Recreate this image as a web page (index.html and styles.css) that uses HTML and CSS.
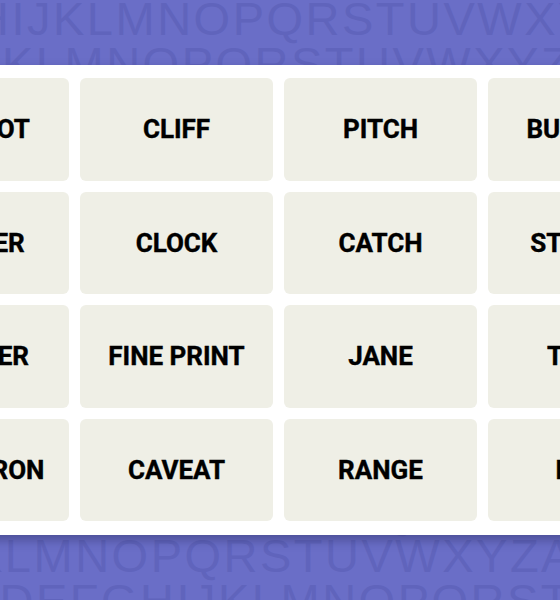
FILE: index.html
```html
<!DOCTYPE html>
<html lang="en">
<head>
<meta charset="utf-8">
<title>Connections board</title>
<link rel="stylesheet" href="styles.css">
</head>
<body>
<div class="letters" aria-hidden="true">
  <div class="lrow la">HIJKLMNOPQRSTUVWXYZABCD</div>
  <div class="lrow lb">JKLMNOPQRSTUVWXYZABCDE</div>
  <div class="lrow">MNOPQRSTUVWXYZABCDEFG</div>
  <div class="lrow">OPQRSTUVWXYZABCDEFGHI</div>
  <div class="lrow">QRSTUVWXYZABCDEFGHIJK</div>
  <div class="lrow">STUVWXYZABCDEFGHIJKLM</div>
  <div class="lrow">UVWXYZABCDEFGHIJKLMNO</div>
  <div class="lrow">WXYZABCDEFGHIJKLMNOPQ</div>
  <div class="lrow">YZABCDEFGHIJKLMNOPQRS</div>
  <div class="lrow">ABCDEFGHIJKLMNOPQRSTU</div>
  <div class="lrow">CDEFGHIJKLMNOPQRSTUVW</div>
  <div class="lrow">EFGHIJKLMNOPQRSTUVWXY</div>
  <div class="lrow lc">KLMNOPQRSTUVWXYZABCDE</div>
  <div class="lrow ld">CDEFGHIJKLMNOPQRSTUVW</div>
</div>
<main class="board">
  <div class="grid">
    <div class="tile">JACKPOT</div>
    <div class="tile">CLIFF</div>
    <div class="tile">PITCH</div>
    <div class="tile">BUTCHER</div>
    <div class="tile">DRAWER</div>
    <div class="tile">CLOCK</div>
    <div class="tile">CATCH</div>
    <div class="tile">STRINGS</div>
    <div class="tile">HAMMER</div>
    <div class="tile">FINE PRINT</div>
    <div class="tile">JANE</div>
    <div class="tile">TOWN</div>
    <div class="tile">OXYMORON</div>
    <div class="tile">CAVEAT</div>
    <div class="tile">RANGE</div>
    <div class="tile">LION</div>
  </div>
</main>
</body>
</html>
```
FILE: styles.css
```css
html, body {
  margin: 0;
  padding: 0;
}
body {
  width: 560px;
  height: 600px;
  overflow: hidden;
  position: relative;
  background: #6a6ec7;
}
.letters {
  position: absolute;
  top: -2.7px;
  left: 0;
  right: 0;
  bottom: 0;
  overflow: hidden;
  font-family: "Liberation Sans", Arial, sans-serif;
  font-size: 47px;
  line-height: 44.75px;
  letter-spacing: 2.5px;
  color: #6064bc;
  white-space: nowrap;
}
.lrow {
  margin-left: -20px;
}
.la { margin-left: -25px; }
.lb { margin-left: -24px; }
.lc { margin-left: -29px; }
.ld { margin-left: -37px; }
.board {
  position: relative;
  margin-top: 65px;
  margin-left: -138px;
  width: 833px;
  height: 470px;
  box-sizing: border-box;
  padding: 13px 14px 14px;
  background: #ffffff;
  box-shadow: 0 5px 10px rgba(20, 20, 60, 0.35);
}
.grid {
  display: grid;
  grid-template-columns: repeat(4, 193px);
  grid-auto-rows: 102.5px;
  gap: 11px;
}
.tile {
  display: flex;
  align-items: center;
  justify-content: center;
  background: #efefe6;
  border-radius: 6px;
  font-family: Roboto, "Liberation Sans", sans-serif;
  font-weight: 700;
  font-size: 26px;
  color: #000000;
  -webkit-text-stroke: 0.4px #000000;
  white-space: nowrap;
}
```
